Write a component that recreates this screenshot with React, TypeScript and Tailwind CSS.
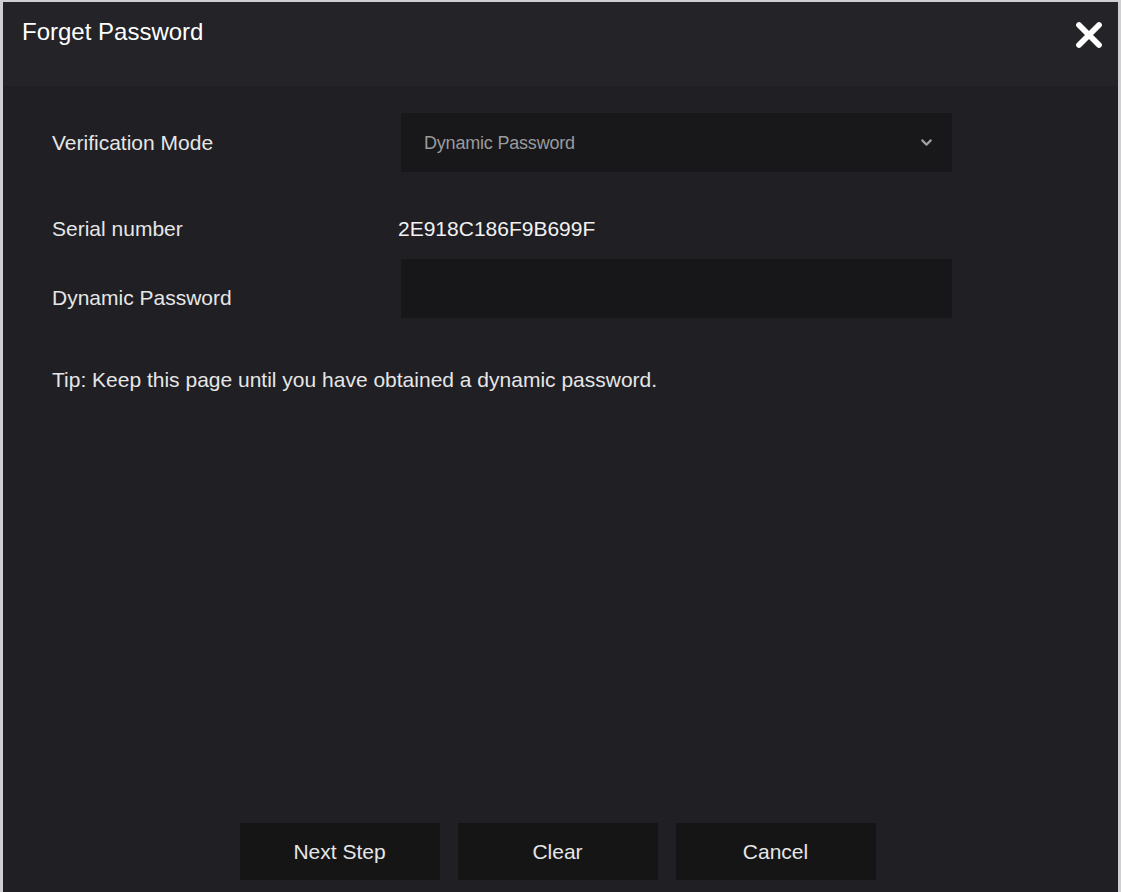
import { ChevronDown } from 'lucide-react';

const font = { fontFamily: '"Liberation Sans", Arial, sans-serif' };

export default function App() {
  return (
    <div
      style={font}
      className="w-[1121px] h-[892px] bg-[#1f1f24] border-t-2 border-l-[3px] border-r-[3px] border-[#cfcfd2] flex flex-col overflow-hidden"
    >
      {/* Title bar */}
      <div className="h-[84px] shrink-0 bg-[#232328] flex items-start justify-between pl-[19px] pr-[12px] pt-[16px]">
        <h1 className="text-[24px] leading-[28px] text-white">Forget Password</h1>
        <button className="w-[34px] h-[34px] flex items-center justify-center">
          <svg viewBox="0 0 24 24" className="w-[30px] h-[30px]">
            <path d="M4 4 L20 20 M20 4 L4 20" stroke="#fff" strokeWidth="4.6" strokeLinecap="round" />
          </svg>
        </button>
      </div>

      {/* Form */}
      <div className="flex-1 flex flex-col pl-[49px] pt-[27px] text-[21px] leading-[24px] text-[#e6e6e6]">
        <div className="flex items-center">
          <div className="w-[349px] shrink-0">Verification Mode</div>
          <div className="w-[551px] h-[59px] bg-[#18181b] flex items-center justify-between pl-[23px] pr-[17px]">
            <span className="text-[18px] text-[#9a9a9c] tracking-[-0.2px]">Dynamic Password</span>
            <ChevronDown className="w-[17px] h-[17px] text-[#a0a0a2]" strokeWidth={3} />
          </div>
        </div>

        <div className="flex items-center mt-[45px]">
          <div className="w-[346px] shrink-0">Serial number</div>
          <span className="text-[#f2f2f2]">2E918C186F9B699F</span>
        </div>

        <div className="flex items-start mt-[18px]">
          <div className="w-[349px] shrink-0 pt-[27px]">Dynamic Password</div>
          <input
            type="password"
            className="w-[551px] h-[59px] bg-[#17171a] outline-none px-[23px] text-[#e6e6e6]"
          />
        </div>

        <p className="mt-[50px]">Tip: Keep this page until you have obtained a dynamic password.</p>

        {/* Actions */}
        <div className="mt-auto mb-[12px] flex justify-center gap-[18px] pr-[55px]">
          {['Next Step', 'Clear', 'Cancel'].map((label) => (
            <button key={label} className="w-[200px] h-[57px] bg-[#151516] text-[#e6e6e6]">
              {label}
            </button>
          ))}
        </div>
      </div>
    </div>
  );
}
